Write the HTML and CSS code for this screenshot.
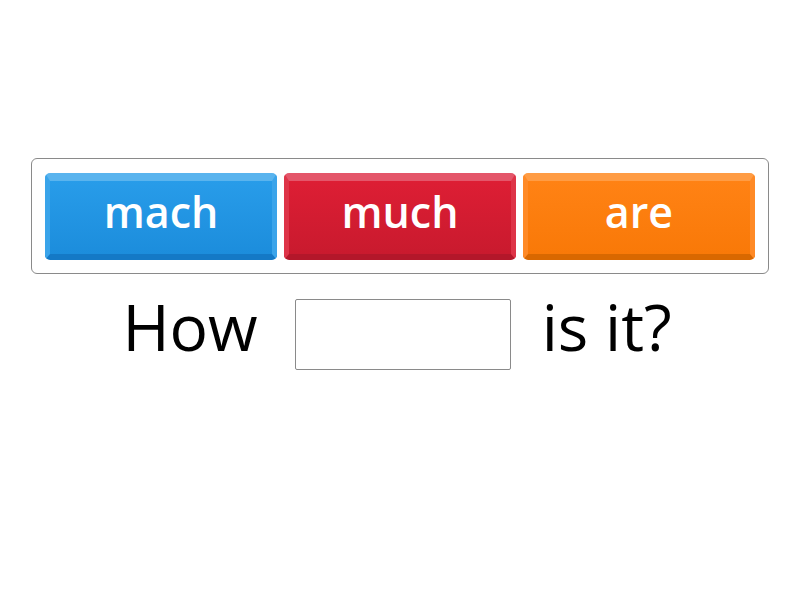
FILE: index.html
```html
<!DOCTYPE html>
<html>
<head>
<meta charset="utf-8">
<link rel="stylesheet" href="styles.css">
</head>
<body>
<div class="page">
  <div class="tray">
    <div class="tile blue">mach</div>
    <div class="tile red">much</div>
    <div class="tile orange">are</div>
  </div>
  <div class="sentence">
    <span class="word lead">How</span>
    <span class="blank"></span>
    <span class="word tail">is it?</span>
  </div>
</div>
</body>
</html>
```
FILE: styles.css
```css
html, body {
  margin: 0;
  padding: 0;
  background: #ffffff;
}
.page {
  width: 800px;
  height: 600px;
  padding-top: 158px;
  box-sizing: border-box;
  font-family: "Open Sans", "DejaVu Sans", sans-serif;
}
.tray {
  margin-left: 31px;
  width: 738px;
  height: 116px;
  box-sizing: border-box;
  border: 1px solid #8a8a8a;
  border-radius: 6px;
  padding: 14px 13px 13px 13px;
  display: flex;
  gap: 7px;
}
.tile {
  width: 232px;
  height: 87px;
  box-sizing: border-box;
  border-radius: 5px;
  border-style: solid;
  border-width: 8px 5px 6px 5px;
  color: #ffffff;
  font-weight: 600;
  font-size: 43px;
  display: flex;
  align-items: center;
  justify-content: center;
  line-height: 1;
  padding-bottom: 12px;
}
.blue {
  border-color: #5ab4ee #3aa4ea #1479c6 #3aa4ea;
  background: linear-gradient(#289ce9, #1c8ddc);
}
.red {
  border-color: #e4566a #de3448 #b3172a #de3448;
  background: linear-gradient(#dd1e34, #c91a2e);
}
.orange {
  border-color: #ff9c44 #ff8a26 #d96800 #ff8a26;
  background: linear-gradient(#ff8214, #f97908);
}
.sentence {
  margin-top: 21px;
  height: 78px;
  display: flex;
  align-items: center;
  justify-content: center;
  font-size: 64px;
  color: #000000;
  padding-right: 6px;
}
.word {
  line-height: 1;
  padding-bottom: 14px;
}
.lead {
  margin-right: 37px;
}
.tail {
  margin-left: 31px;
}
.blank {
  width: 216px;
  height: 71px;
  box-sizing: border-box;
  border: 1px solid #8a8a8a;
  border-radius: 2px;
  background: #ffffff;
}
```
